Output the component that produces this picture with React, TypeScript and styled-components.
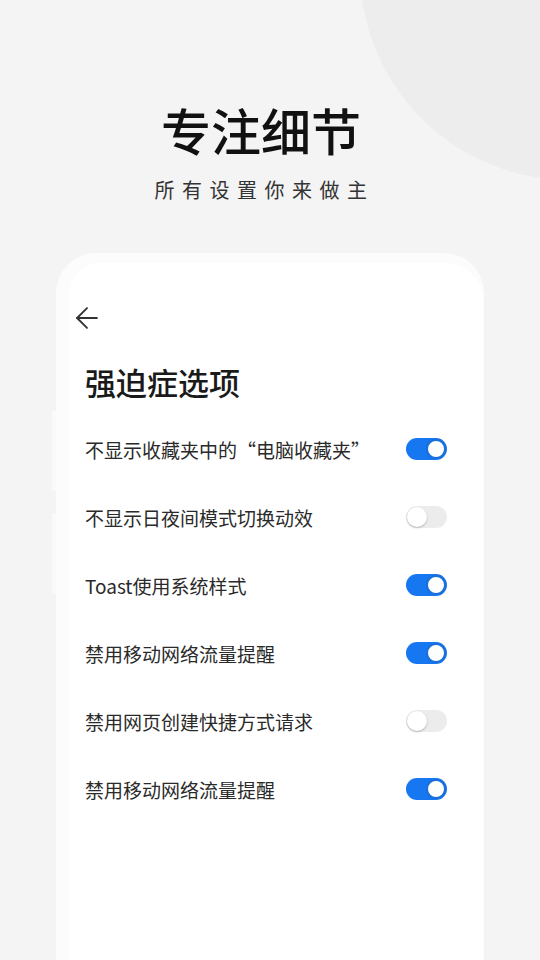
import styled, { createGlobalStyle } from 'styled-components';
import { ArrowLeft } from 'lucide-react';

const GlobalStyle = createGlobalStyle`
  html, body {
    margin: 0;
    padding: 0;
    background: #f4f4f4;
    font-family: "Noto Sans CJK SC", "Noto Sans", sans-serif;
  }
  * { box-sizing: border-box; }
`;

const Page = styled.div`
  position: relative;
  width: 540px;
  height: 960px;
  overflow: hidden;
  background: #f4f4f4;
  display: flex;
  flex-direction: column;
  align-items: center;
`;

const Blob = styled.div`
  position: absolute;
  left: 360px;
  top: -240px;
  width: 420px;
  height: 420px;
  border-radius: 50%;
  background: #ededed;
`;

const Header = styled.div`
  position: relative;
  padding-top: 98px;
  padding-right: 18px;
  display: flex;
  flex-direction: column;
  align-items: center;
  gap: 16px;
`;

const Title = styled.h1`
  margin: 0;
  font-size: 50px;
  line-height: 62px;
  font-weight: 500;
  color: #111;
`;

const Subtitle = styled.div`
  font-size: 20px;
  line-height: 28px;
  color: #333;
  letter-spacing: 7.5px;
  margin-right: -7px;
`;

const Phone = styled.div`
  position: relative;
  flex-shrink: 0;
  margin-top: 49px;
  width: 428px;
  height: 760px;
  border-radius: 40px;
  background: #fcfcfc;
  padding: 10px 1px 0 13px;
  display: flex;
`;

const SideButton = styled.div<{ $top: number }>`
  position: absolute;
  left: -4px;
  top: ${(p) => p.$top}px;
  width: 4px;
  height: 80px;
  border-radius: 2px 0 0 2px;
  background: #fafafa;
`;

const Screen = styled.div`
  flex: 1;
  background: #fff;
  border-radius: 32px 38px 0 0;
  padding: 38px 36px 0 16px;
  display: flex;
  flex-direction: column;
`;

const BackButton = styled.div`
  width: 34px;
  height: 34px;
  margin-left: -15px;
  display: flex;
  align-items: center;
  justify-content: center;
  color: #333;
`;

const Heading = styled.h2`
  margin: 27px 0 13px;
  font-size: 31px;
  line-height: 40px;
  font-weight: 500;
  color: #1a1a1a;
`;

const Row = styled.div`
  height: 68px;
  display: flex;
  align-items: center;
  justify-content: space-between;
`;

const Label = styled.span`
  font-size: 19px;
  color: #2a2a2a;
`;

const Track = styled.div<{ $on: boolean }>`
  position: relative;
  width: 41px;
  height: 22px;
  border-radius: 11px;
  background: ${(p) => (p.$on ? '#1677f0' : '#ececec')};
`;

const Knob = styled.div<{ $on: boolean }>`
  position: absolute;
  top: 1px;
  left: ${(p) => (p.$on ? '20px' : '1px')};
  width: 20px;
  height: 20px;
  border-radius: 50%;
  background: #fff;
  border: ${(p) => (p.$on ? '2px solid #1a6fd8' : 'none')};
  box-shadow: ${(p) => (p.$on ? 'none' : '0 1px 2px rgba(0,0,0,0.25)')};
`;

const options = [
  { label: '不显示收藏夹中的“电脑收藏夹”', on: true },
  { label: '不显示日夜间模式切换动效', on: false },
  { label: 'Toast使用系统样式', on: true },
  { label: '禁用移动网络流量提醒', on: true },
  { label: '禁用网页创建快捷方式请求', on: false },
  { label: '禁用移动网络流量提醒', on: true },
];

const Toggle = ({ on }: { on: boolean }) => (
  <Track $on={on}>
    <Knob $on={on} />
  </Track>
);

const App = () => {
  return (
    <Page>
      <GlobalStyle />
      <Blob />
      <Header>
        <Title>专注细节</Title>
        <Subtitle>所有设置你来做主</Subtitle>
      </Header>
      <Phone>
        <SideButton $top={158} />
        <SideButton $top={260} />
        <Screen>
          <BackButton>
            <ArrowLeft size={34} strokeWidth={1.3} />
          </BackButton>
          <Heading>强迫症选项</Heading>
          {options.map((o, i) => (
            <Row key={i}>
              <Label>{o.label}</Label>
              <Toggle on={o.on} />
            </Row>
          ))}
        </Screen>
      </Phone>
    </Page>
  );
};

export default App;
